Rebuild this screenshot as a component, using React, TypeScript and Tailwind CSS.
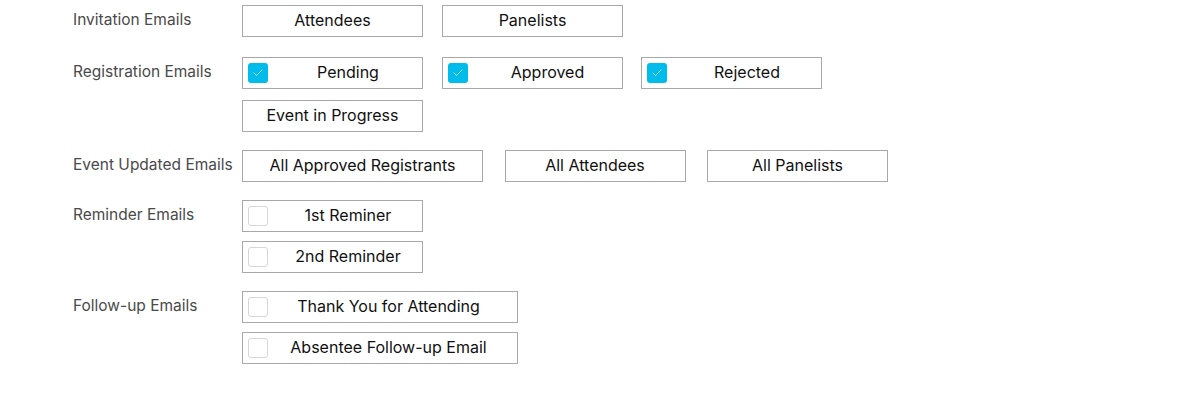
import { Check } from "lucide-react";

type Opt = { label: string; checked?: boolean; box?: boolean; w: string; textPad?: string };

function Checkbox({ checked }: { checked?: boolean }) {
  if (checked) {
    return (
      <span className="flex h-5 w-5 shrink-0 items-center justify-center rounded-[3px] bg-[#00bceb]">
        <Check size={12} strokeWidth={1.5} className="text-white" />
      </span>
    );
  }
  return <span className="h-5 w-5 shrink-0 rounded-[3px] border border-[#d6d6d6] bg-white" />;
}

function OptionButton({ opt }: { opt: Opt }) {
  if (!opt.box) {
    return (
      <button
        className="flex h-8 items-center justify-center border border-[#a8a8a8] bg-white pb-[2px] text-[16px] text-[#111]"
        style={{ width: opt.w }}
      >
        {opt.label}
      </button>
    );
  }
  return (
    <button
      className="flex h-8 items-center border border-[#a8a8a8] bg-white pl-[5px] text-[16px] text-[#111]"
      style={{ width: opt.w }}
    >
      <Checkbox checked={opt.checked} />
      <span className={`mb-[2px] ml-[6px] flex-1 text-center ${opt.textPad ?? ""}`}>{opt.label}</span>
    </button>
  );
}

type Row = {
  title: string;
  lines: Opt[][];
  gap: string;
  stack: string;
  mb: string;
};

const rows: Row[] = [
  {
    title: "Invitation Emails",
    lines: [[
      { label: "Attendees", w: "181px" },
      { label: "Panelists", w: "181px" },
    ]],
    gap: "gap-[19px]",
    stack: "gap-0",
    mb: "mb-[20px]",
  },
  {
    title: "Registration Emails",
    lines: [
      [
        { label: "Pending", w: "181px", box: true, checked: true },
        { label: "Approved", w: "181px", box: true, checked: true },
        { label: "Rejected", w: "181px", box: true, checked: true },
      ],
      [{ label: "Event in Progress", w: "181px" }],
    ],
    gap: "gap-[18.5px]",
    stack: "gap-[11px]",
    mb: "mb-[18px]",
  },
  {
    title: "Event Updated Emails",
    lines: [[
      { label: "All Approved Registrants", w: "241px" },
      { label: "All Attendees", w: "181px" },
      { label: "All Panelists", w: "181px" },
    ]],
    gap: "gap-[21.5px]",
    stack: "gap-0",
    mb: "mb-[18px]",
  },
  {
    title: "Reminder Emails",
    lines: [
      [{ label: "1st Reminer", w: "181px", box: true }],
      [{ label: "2nd Reminder", w: "181px", box: true }],
    ],
    gap: "gap-0",
    stack: "gap-[9px]",
    mb: "mb-[18px]",
  },
  {
    title: "Follow-up Emails",
    lines: [
      [{ label: "Thank You for Attending", w: "276px", box: true, textPad: "pr-[14px]" }],
      [{ label: "Absentee Follow-up Email", w: "276px", box: true, textPad: "pr-[14px]" }],
    ],
    gap: "gap-0",
    stack: "gap-[9px]",
    mb: "mb-0",
  },
];

export default function App() {
  return (
    <div
      className="h-[402px] w-[1198px] bg-white pl-[73px] pt-[5px]"
      style={{ fontFamily: "Inter, 'Liberation Sans', Arial, sans-serif" }}
    >
      {rows.map((row) => (
        <div key={row.title} className={`flex items-start ${row.mb}`}>
          <div className="w-[169px] shrink-0 pt-[5px] text-[15.5px] leading-5 text-[#4a4a4a]">
            {row.title}
          </div>
          <div className={`flex flex-col ${row.stack}`}>
            {row.lines.map((line, i) => (
              <div key={i} className={`flex ${row.gap}`}>
                {line.map((opt) => (
                  <OptionButton key={opt.label} opt={opt} />
                ))}
              </div>
            ))}
          </div>
        </div>
      ))}
    </div>
  );
}
